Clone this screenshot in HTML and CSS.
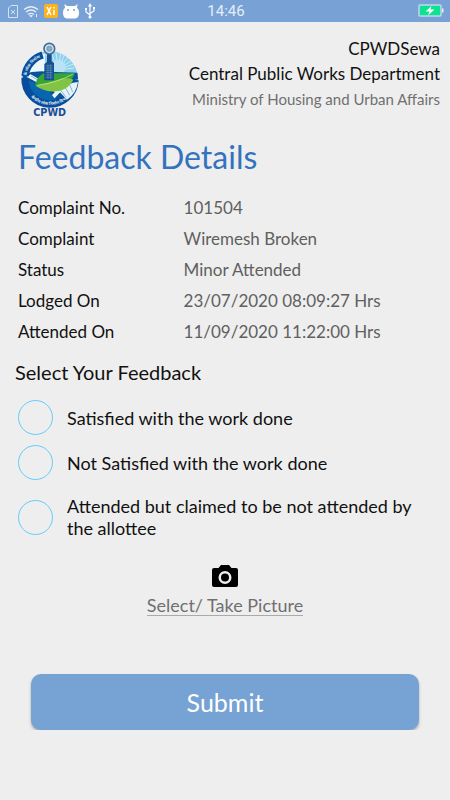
FILE: index.html
```html
<!DOCTYPE html>
<html lang="en">
<head>
    <meta charset="UTF-8">
    <meta name="viewport" content="width=device-width, initial-scale=1.0">
    <title>CPWDSewa - Feedback Details</title>
    <link rel="stylesheet" href="styles.css">
</head>
<body>
    <div class="status-bar">
        <div class="status-icons">
            <svg width="10" height="13" viewBox="0 0 10 13" fill="none" stroke="#d5e2f2"><path d="M3 .5h6.500v12h-9V3z"/><path d="M3 5l4 4M7 5l-4 4"/></svg>
            <svg width="16" height="13" viewBox="0 0 16 13" fill="none" stroke="#e4edf8" stroke-width="1.400"><path d="M1 4.500Q8-1 15 4.500M3 7q5-4 10 0M5 9.500q3-2.300 6 0"/><path d="M8 12.500l-2-2q2-1 4 0z" fill="#e4edf8" stroke="none"/><path d="M13.500 9v3" stroke-width="1"/></svg>
            <svg width="14" height="14" viewBox="0 0 14 14"><rect width="14" height="14" rx="2" fill="#fbb320"/><path d="M3 3l4 8M7 3l-4 8M10 6v5M10 3v1.500" stroke="#fff" stroke-width="1.500"/></svg>
            <svg width="16" height="15" viewBox="0 0 16 15"><path d="M1.500 0L4 2h8l2.500-2-.5 4q2 1 2 5 0 5-4 5.500H4Q0 14 0 9q0-4 2-5z" fill="#fff"/><circle cx="5" cy="6" r="1" fill="#78a2d5"/><circle cx="11" cy="6" r="1" fill="#78a2d5"/></svg>
            <svg width="12" height="16" viewBox="0 0 12 16" fill="none" stroke="#fff" stroke-width="1.200"><path d="M6 2v12M6 12L2 9V6M6 10.500l4-2.500V5"/><path d="M4 3.500L6 0l2 3.500zM1 5h2v2H1zM9 4h2v2H9z" fill="#fff" stroke="none"/><circle cx="6" cy="14" r="1.500" fill="#fff" stroke="none"/></svg>
        </div>
        <span class="clock">14:46</span>
        <svg class="battery" width="26" height="14" viewBox="0 0 26 14"><rect x="1" y="1" width="22" height="11" rx="1" fill="#0be391" stroke="#c3d5ee" stroke-width="1.500"/><path d="M24 4.500h1.500v4H24z" fill="#e4edf8"/><path d="M13.500 2L7.500 7.500h4L10 11.500l6.500-6h-4z" fill="#fff"/></svg>
    </div>

    <header class="header">
        <svg class="logo" width="60" height="75" viewBox="30 20 180 225" role="img" aria-label="CPWD">
            <defs>
                <clipPath id="globe"><circle cx="120" cy="131" r="84"/></clipPath>
                <path id="ring-bottom" d="M45 155A79 79 0 0 0 195 155"/>
                <path id="ring-left" d="M49 127A71 71 0 0 1 97 64"/>
            </defs>
            <g clip-path="url(#globe)">
                <circle cx="120" cy="131" r="84" fill="#8fd0ef"/>
                <path d="M40 55h65v80H40z" fill="#edf7fb"/>
                <path d="M144 104l-37-47M144 104l-20-50M144 104l-6-52M144 104l8-50M144 104l20-47M144 104l31-40M144 104l42-30M144 104l47-18M144 104l48-6" stroke="#e8f6fc" stroke-width="2"/>
                <circle cx="145" cy="95" r="22" fill="#b9e2f4"/>
                <path d="M36 118q40-14 79-9l90 3v65l-30 36H69z" fill="#07549d"/>
                <path d="M49 124l13-7 70 40 42-20 32-5v14q-45 7-74 45l-17-1 20-20z" fill="#eef5f8"/>
                <path d="M63 122l64 37M50 134l60 42" stroke="#4f8fc5" stroke-width="2"/>
                <path d="M46 143q42-12 71 25t30 36H60z" fill="#0866ae"/>
            </g>
            <path class="ring" d="M45 128A75 75 0 0 0 195 134"/>
            <path class="ring" d="M45 122A75 75 0 0 1 98 59"/>
            <path d="M147 168q25-26 57-28-4 34-33 53z" fill="#e5f2f7"/>
            <path d="M151 163l18 24M164 153l15 27M178 146l10 24" stroke="#5498c9" stroke-width="2"/>
            <path d="M76 151q3-27 25-37h94q-11 27-35 35-36 14-48 8z" fill="#36a533"/>
            <path d="M76 151q39-8 69-18 28-8 45 0-12 25-40 33-38 9-74-15z" fill="#81c342"/>
            <path d="M82 150q58-8 106-33" fill="none" stroke="#e1efa5" stroke-width="2"/>
            <path d="M103 135V86l8-6V56h14v22l7 5v52z" fill="#164f8f"/>
            <path d="M107 91h21M107 98h21M107 105h21M107 112h21M107 119h21M107 126h21M114 87v44M122 87v44" stroke="#5c90c1" stroke-width="2"/>
            <circle cx="118" cy="40" r="16" fill="#d9e5ec" stroke="#426d9a" stroke-width="5"/>
            <circle cx="118" cy="40" r="9" fill="#6f99b9"/>
            <path d="M118 27v26M105 40h26M109 31l18 18M109 49l18-18" stroke="#b9cedd"/>
            <text class="logo-ring"><textPath href="#ring-left" startOffset="50%" text-anchor="middle">के लोक निर्माण</textPath></text>
            <text class="logo-ring"><textPath href="#ring-bottom" startOffset="50%" text-anchor="middle">केन्द्रीय लोक निर्माण विभाग</textPath></text>
            <text class="logo-name" x="119" y="242" text-anchor="middle">CPWD</text>
        </svg>
        <div class="header-text">
            <div>CPWDSewa</div>
            <div>Central Public Works Department</div>
            <div class="ministry">Ministry of Housing and Urban Affairs</div>
        </div>
    </header>

    <main>
        <h1>Feedback Details</h1>
        <dl class="details">
            <dt>Complaint No.</dt><dd>101504</dd>
            <dt>Complaint</dt><dd>Wiremesh Broken</dd>
            <dt>Status</dt><dd>Minor Attended</dd>
            <dt>Lodged On</dt><dd>23/07/2020 08:09:27 Hrs</dd>
            <dt>Attended On</dt><dd>11/09/2020 11:22:00 Hrs</dd>
        </dl>

        <form>
            <fieldset class="feedback">
                <legend>Select Your Feedback</legend>
                <div class="option">
                    <input type="radio" name="feedback" id="satisfied" value="satisfied">
                    <label for="satisfied">Satisfied with the work done</label>
                </div>
                <div class="option">
                    <input type="radio" name="feedback" id="not-satisfied" value="not-satisfied">
                    <label for="not-satisfied">Not Satisfied with the work done</label>
                </div>
                <div class="option option-tall">
                    <input type="radio" name="feedback" id="not-attended" value="not-attended">
                    <label for="not-attended">Attended but claimed to be not attended by the allottee</label>
                </div>
            </fieldset>

            <a class="picture" href="#">
                <svg width="26" height="24" viewBox="0 0 26 24"><path fill-rule="evenodd" d="M9 1h8l2.500 3H24q2 0 2 2v15q0 2-2 2H2q-2 0-2-2V6q0-2 2-2h4.500zM13 7a6.500 6.500 0 1 0 0 13 6.500 6.500 0 0 0 0-13z"/><circle cx="13" cy="13.500" r="4"/></svg>
                <span>Select/ Take Picture</span>
            </a>

            <button class="submit" type="button">Submit</button>
        </form>
    </main>
</body>
</html>
```
FILE: styles.css
```css
* {
    box-sizing: border-box;
}
body {
    margin: 0;
    font-family: Lato, sans-serif;
    font-size: 18px;
    color: #111;
    background: #eee;
}
.status-bar {
    display: grid;
    grid-template-columns: 1fr auto 1fr;
    align-items: center;
    height: 22px;
    padding: 0 6px 0 8px;
    background: #78a2d5;
    color: #e4edf8;
}
.status-icons {
    display: flex;
    align-items: center;
    gap: 5px;
}
.clock {
    font-family: Roboto, sans-serif;
    font-size: 15px;
}
.battery {
    justify-self: end;
}
.header {
    display: flex;
    justify-content: space-between;
    padding: 14px 10px 0 20px;
}
.logo {
    margin-top: 6px;
}
.ring {
    fill: none;
    stroke: #084d9b;
    stroke-width: 22px;
}
.logo-name {
    font-family: "DejaVu Sans", sans-serif;
    font-size: 29px;
    font-weight: bold;
    fill: #164f98;
}
.logo-ring {
    font-family: "Noto Sans", sans-serif;
    font-size: 12px;
    font-weight: bold;
    fill: #dfeaf5;
}
.header-text {
    text-align: right;
    font-size: 17px;
    line-height: 25px;
}
.ministry {
    font-size: 15px;
    line-height: 27px;
    color: #707070;
}
h1 {
    margin: 20px 18px 0;
    font-size: 32px;
    font-weight: normal;
    line-height: 40px;
    color: #3272bf;
}
.details {
    display: grid;
    grid-template-columns: 40% 1fr;
    margin: 15px 18px 0;
    font-size: 17px;
    line-height: 31px;
}
.details dd {
    margin: 0;
    color: #606060;
}
.feedback {
    margin: 13px 0 0;
    padding: 0 15px;
    border: 0;
}
.feedback legend {
    margin-bottom: 11px;
    padding: 0;
    font-size: 20px;
    line-height: 24px;
}
.option {
    display: flex;
    align-items: center;
    gap: 14px;
    min-height: 45px;
    padding: 0 3px;
    line-height: 22px;
}
.option input {
    appearance: none;
    flex: none;
    width: 35px;
    height: 35px;
    margin: 0;
    border: 1px solid #62cdfa;
    border-radius: 50%;
}
.option input:checked {
    background: #62cdfa;
    box-shadow: inset 0 0 0 7px #eee;
}
.option-tall {
    min-height: 64px;
}
.picture {
    display: flex;
    flex-direction: column;
    align-items: center;
    width: fit-content;
    margin: 15px auto 0;
    color: #707070;
    text-decoration: none;
}
.picture svg {
    fill: #000;
}
.picture span {
    margin-top: 7px;
    border-bottom: 1px solid #aaa;
    line-height: 20px;
}
.submit {
    display: block;
    width: calc(100% - 62px);
    height: 56px;
    margin: 58px auto 0;
    border: 0;
    border-radius: 10px;
    background: #76a2d4;
    box-shadow: 0 2px 3px #aaa;
    color: #fff;
    font-family: inherit;
    font-size: 25px;
}
```
